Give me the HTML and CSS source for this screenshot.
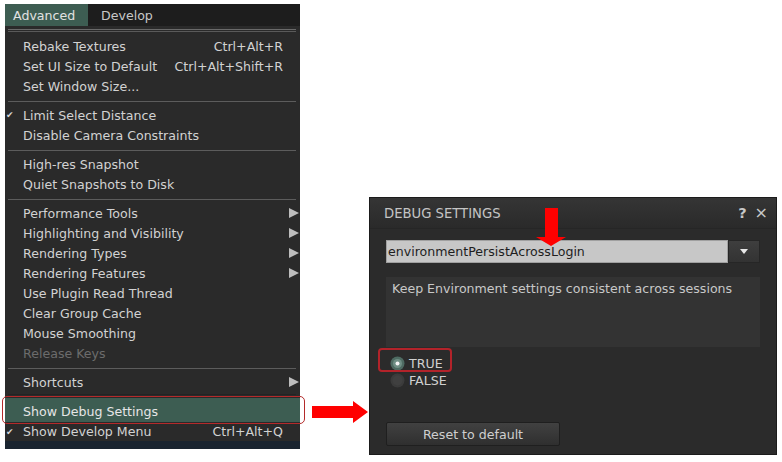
FILE: index.html
```html
<!DOCTYPE html>
<html>
<head>
<meta charset="utf-8">
<link rel="stylesheet" href="styles.css">
</head>
<body>
<div class="page">
  <div class="menu">
    <div class="menubar">
      <span class="tab active">Advanced</span>
      <span class="tab">Develop</span>
    </div>
    <div class="dropdown">
      <div class="topline"></div>
      <div class="item"><span class="check"></span><span class="label">Rebake Textures</span><span class="key">Ctrl+Alt+R</span></div>
      <div class="item"><span class="check"></span><span class="label">Set UI Size to Default</span><span class="key">Ctrl+Alt+Shift+R</span></div>
      <div class="item"><span class="check"></span><span class="label">Set Window Size...</span></div>
      <div class="sep"></div>
      <div class="item"><span class="check">✔</span><span class="label">Limit Select Distance</span></div>
      <div class="item"><span class="check"></span><span class="label">Disable Camera Constraints</span></div>
      <div class="sep"></div>
      <div class="item"><span class="check"></span><span class="label">High-res Snapshot</span></div>
      <div class="item"><span class="check"></span><span class="label">Quiet Snapshots to Disk</span></div>
      <div class="sep"></div>
      <div class="item sub"><span class="check"></span><span class="label">Performance Tools</span><svg class="tri" width="10" height="10" viewBox="0 0 10 10"><path d="M0 0 L10 5 L0 10 Z"/></svg></div>
      <div class="item sub"><span class="check"></span><span class="label">Highlighting and Visibility</span><svg class="tri" width="10" height="10" viewBox="0 0 10 10"><path d="M0 0 L10 5 L0 10 Z"/></svg></div>
      <div class="item sub"><span class="check"></span><span class="label">Rendering Types</span><svg class="tri" width="10" height="10" viewBox="0 0 10 10"><path d="M0 0 L10 5 L0 10 Z"/></svg></div>
      <div class="item sub"><span class="check"></span><span class="label">Rendering Features</span><svg class="tri" width="10" height="10" viewBox="0 0 10 10"><path d="M0 0 L10 5 L0 10 Z"/></svg></div>
      <div class="item"><span class="check"></span><span class="label">Use Plugin Read Thread</span></div>
      <div class="item"><span class="check"></span><span class="label">Clear Group Cache</span></div>
      <div class="item"><span class="check"></span><span class="label">Mouse Smoothing</span></div>
      <div class="item disabled"><span class="check"></span><span class="label">Release Keys</span></div>
      <div class="sep"></div>
      <div class="item sub"><span class="check"></span><span class="label">Shortcuts</span><svg class="tri" width="10" height="10" viewBox="0 0 10 10"><path d="M0 0 L10 5 L0 10 Z"/></svg></div>
      <div class="sep small"></div>
      <div class="item selected"><span class="check"></span><span class="label">Show Debug Settings</span></div>
      <div class="item last"><span class="check">✔</span><span class="label">Show Develop Menu</span><span class="key">Ctrl+Alt+Q</span></div>
      <div class="bottomstrip"></div>
    </div>
  </div>

  <svg class="arrow-right" width="56" height="22" viewBox="0 0 56 22"><path d="M0 5 H41 V0 L56 11 L41 22 V17 H0 Z" fill="#f00"/></svg>

  <div class="panel">
    <div class="titlebar">
      <span class="title">DEBUG SETTINGS</span>
      <span class="tools"><span class="help">?</span><span class="close">×</span></span>
    </div>
    <div class="body">
      <div class="combo">
        <div class="field">environmentPersistAcrossLogin</div>
        <div class="dropbtn"><svg width="8" height="5" viewBox="0 0 8 5"><path d="M0 0 H8 L4 5 Z" fill="#e8e8e8"/></svg></div>
      </div>
      <div class="desc">Keep Environment settings consistent across sessions</div>
      <div class="radios">
        <div class="radio on">
          <svg class="dot" width="15" height="15" viewBox="0 0 15 15"><circle cx="7.5" cy="7.5" r="7" fill="#4e6b62"/><circle cx="7.5" cy="7.5" r="4.5" fill="#6f8e84"/><circle cx="7.5" cy="7.5" r="2" fill="#f4f4f4"/></svg>
          <span>TRUE</span>
          <span class="radio-hl"></span>
        </div>
        <div class="radio">
          <svg class="dot" width="15" height="15" viewBox="0 0 15 15"><circle cx="7.5" cy="7.5" r="7" fill="#3b3b3b"/><circle cx="7.5" cy="7.5" r="5" fill="#404040"/></svg>
          <span>FALSE</span>
        </div>
      </div>
      <div class="btnrow"><span class="btn">Reset to default</span></div>
    </div>
    <svg class="arrow-down" width="30" height="38" viewBox="0 0 30 38"><path d="M9 0 H22 V29 H30 L15 38 L0 29 H9 Z" fill="#f00"/></svg>
  </div>
</div>
</body>
</html>
```

FILE: styles.css
```css
html, body {
  margin: 0;
  padding: 0;
  background: #ffffff;
}
body {
  font-family: "DejaVu Sans", "Liberation Sans", sans-serif;
  font-size: 12.6px;
  width: 782px;
  height: 462px;
  overflow: hidden;
}
.page {
  display: flex;
  align-items: flex-start;
}

/* ---------- menu ---------- */
.menu {
  margin: 4px 0 0 5px;
  width: 295px;
}
.menubar {
  display: flex;
  height: 22px;
  background: #1d1d1d;
}
.tab {
  display: flex;
  align-items: center;
  color: #c8c8c8;
  padding: 0 13px 0 13px;
}
.tab.active {
  background: #3d5d52;
  color: #e2e2e2;
  width: 83px;
  box-sizing: border-box;
  padding-left: 8px;
}
.dropdown {
  background: #2a2a2a;
  position: relative;
  height: 423px;
  display: flex;
  flex-direction: column;
}
.topline {
  height: 10px;
  box-sizing: border-box;
  padding-top: 3px;
}
.topline::before {
  content: "";
  display: block;
  margin: 0 4px 0 3px;
  border-top: 1px solid #6a6a6a;
  border-bottom: 1px solid #5a5a5a;
  box-sizing: content-box;
  height: 1px;
}
.item {
  display: flex;
  align-items: center;
  height: 20px;
  color: #d2d2d2;
  padding-right: 17px;
  position: relative;
  white-space: nowrap;
}
.check {
  width: 18px;
  flex: none;
  font-size: 9px;
  color: #d8d8d8;
  padding-left: 1px;
  box-sizing: border-box;
}
.key {
  margin-left: auto;
}
.item.sub {
  padding-right: 1px;
}
.tri {
  margin-left: auto;
  fill: #bdbdbd;
}
.item.disabled {
  color: #6c6c6c;
}
.sep {
  height: 9px;
  box-sizing: border-box;
  padding-top: 5px;
}
.sep::before {
  content: "";
  display: block;
  height: 1px;
  margin: 0 4px 0 3px;
  background: #5c5c5c;
}
.sep.small {
  height: 6px;
  padding-top: 2px;
}
.sep.small::before {
  background: #232323;
}
.item.selected {
  height: 24px;
  padding-top: 3px;
  box-sizing: border-box;
  background: #3d5d52;
  color: #e6e6e6;
}
.item.selected::after {
  content: "";
  position: absolute;
  left: -3px;
  right: -5px;
  top: -2px;
  bottom: -2px;
  border: 1.5px solid #b42a2a;
  border-radius: 5px;
}
.item.last {
  height: 19px;
}
.bottomstrip {
  margin-top: auto;
  height: 8px;
  background: #1a2430;
}

/* ---------- arrow ---------- */
.arrow-right {
  flex: none;
  margin: 401px 0 0 12px;
}

/* ---------- panel ---------- */
.panel {
  position: relative;
  margin: 197px 0 0 1px;
  width: 408px;
  height: 258px;
  box-sizing: border-box;
  background: #2b2b2b;
  border: 1px solid #1b1b1b;
}
.titlebar {
  height: 30px;
  display: flex;
  align-items: center;
  padding: 0 8px 0 14px;
  background: linear-gradient(#353535, #2a2a2a);
  border-bottom: 1px solid #262626;
}
.title {
  color: #c4c4c4;
  font-size: 13.2px;
}
.tools {
  margin-left: auto;
  display: flex;
  align-items: center;
  gap: 8px;
  color: #c8c8c8;
}
.help {
  font-weight: bold;
  font-size: 14.5px;
}
.close {
  font-size: 16px;
  line-height: 14px;
}
.body {
  padding: 11px 16px 0 16px;
}
.combo {
  display: flex;
  height: 23px;
}
.field {
  flex: 1;
  background: #c7c7c7;
  color: #1e1e1e;
  display: flex;
  align-items: center;
  padding-left: 1px;
  border: 1px solid #a0a0a0;
  box-sizing: border-box;
}
.dropbtn {
  width: 32px;
  background: linear-gradient(#3e3e3e, #333333);
  border: 1px solid #262626;
  box-sizing: border-box;
  display: flex;
  align-items: center;
  justify-content: center;
}
.desc {
  margin-top: 14px;
  height: 70px;
  background: #333333;
  color: #c8c8c8;
  padding: 4px 6px;
  box-sizing: border-box;
}
.radios {
  margin-top: 8px;
  display: flex;
  flex-direction: column;
}
.radio {
  position: relative;
  height: 17px;
  display: flex;
  align-items: center;
  color: #d0d0d0;
  padding-left: 4px;
  gap: 4px;
}
.radio-hl {
  position: absolute;
  left: -8px;
  top: -7px;
  width: 74px;
  height: 24px;
  box-sizing: border-box;
  border: 2px solid #b3232a;
  border-radius: 4px;
}
.btnrow {
  margin-top: 33px;
  display: flex;
}
.btn {
  width: 174px;
  height: 24px;
  box-sizing: border-box;
  display: flex;
  align-items: center;
  justify-content: center;
  color: #cfcfcf;
  background: linear-gradient(#414141, #2f2f2f);
  border: 1px solid #1f1f1f;
  border-radius: 2px;
}
.arrow-down {
  position: absolute;
  left: 166px;
  top: 10px;
}
```
